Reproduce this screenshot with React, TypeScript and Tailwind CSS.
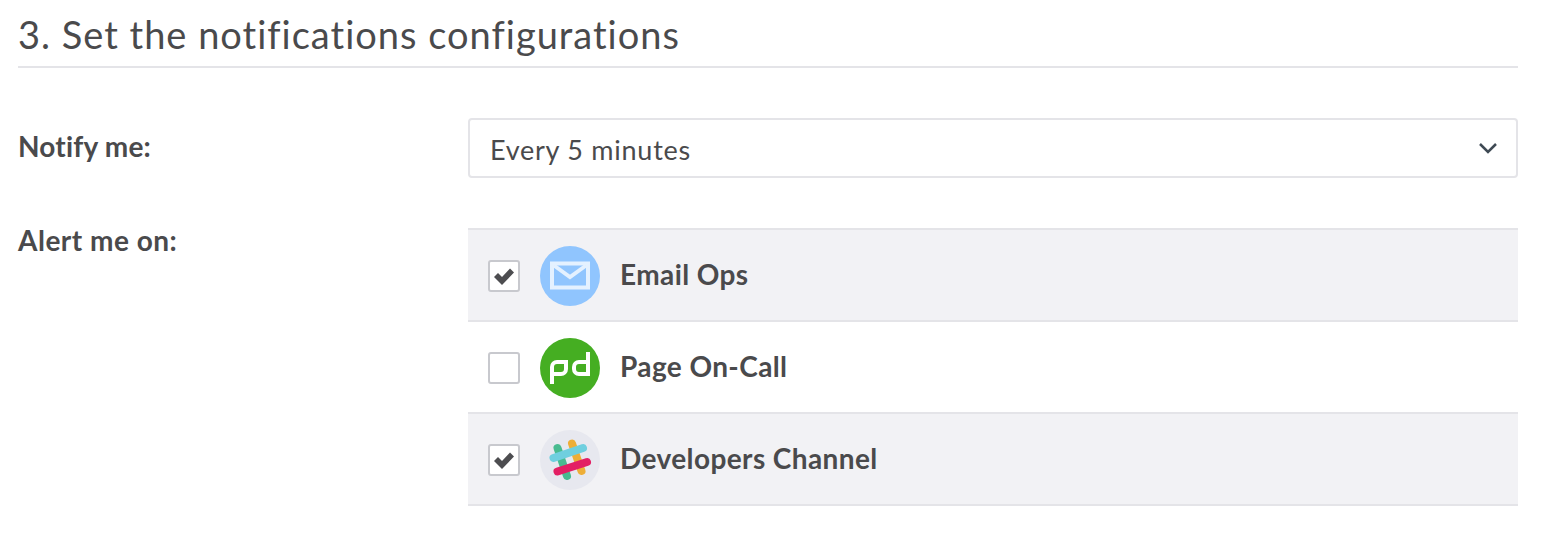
function MailIcon() {
  return (
    <svg width="60" height="60" viewBox="0 0 60 60" className="shrink-0">
      <circle cx="30" cy="30" r="30" fill="#90c5fe" />
      <rect x="12" y="17.500" width="36" height="24" fill="none" stroke="#e4f1ff" strokeWidth="4" />
      <path d="M14 19.500l16 11.500 16-11.500" fill="none" stroke="#e4f1ff" strokeWidth="4" />
    </svg>
  );
}

function PdIcon() {
  return (
    <svg width="60" height="60" viewBox="0 0 60 60" className="shrink-0">
      <circle cx="30" cy="30" r="30" fill="#45ae22" />
      <path d="M12 46V29a5 5 0 0 1 5-5h9V31a5 5 0 0 1-5 5H12" fill="none" stroke="#fff" strokeWidth="4" />
      <path d="M48 14V36H39a5 5 0 0 1-5-5V29a5 5 0 0 1 5-5h9" fill="none" stroke="#fff" strokeWidth="4" />
    </svg>
  );
}

function SlackIcon() {
  return (
    <svg width="60" height="60" viewBox="0 0 60 60" className="shrink-0">
      <circle cx="30" cy="30" r="30" fill="#e7e8ef" />
      <g fill="none" strokeWidth="8" strokeLinecap="round">
        <path d="M17.500 18L27 46" stroke="#48bb90" />
        <path d="M32 13.500L41.500 41" stroke="#eeae37" />
        <path d="M13.500 28L43 18" stroke="#6fcfdf" />
        <path d="M17.500 41.500L47 32" stroke="#e31f64" />
      </g>
    </svg>
  );
}

function Check({ on }: { on: boolean }) {
  return (
    <div className="w-8 h-8 shrink-0 rounded-[3px] border-2 border-[#c8c9ce] bg-white flex items-center justify-center">
      {on && (
        <svg width="22" height="18" viewBox="0 0 22 18">
          <path d="M1 10l4-4 4 4L17 1.500l4 4L9 18z" fill="#4d4d50" />
        </svg>
      )}
    </div>
  );
}

function Row({ on, shaded, icon, label }: { on: boolean; shaded: boolean; icon: React.ReactNode; label: string }) {
  return (
    <div className={`h-[92px] pl-5 pt-[2px] flex items-center border-b-2 border-[#e4e4e8] ${shaded ? "bg-[#f2f2f5]" : "bg-white"}`}>
      <Check on={on} />
      <div className="ml-5">{icon}</div>
      <span className="ml-5 -mt-[4px] text-[28px] tracking-[0.4px] font-bold text-[#4a4a4c]">{label}</span>
    </div>
  );
}

export default function App() {
  return (
    <div className="w-[1554px] h-[544px] bg-white px-[18px] pt-[10px] font-['Lato','Noto_Sans',sans-serif] text-[#4a4a4c]">
      <div className="w-[1500px]">
        <h2 className="h-[58px] border-b-2 border-[#e4e4e8] text-[38px] leading-[48px] tracking-[1px]">
          3. Set the notifications configurations
        </h2>
        <div className="mt-[50px] flex">
          <div className="w-[450px] pt-[8px] text-[28px] tracking-[0.2px] font-bold leading-[40px]">Notify me:</div>
          <div className="flex-1 h-[60px] rounded-[4px] border-2 border-[#e4e4e8] pl-[20px] pr-[18px] pt-[4px] flex items-center justify-between text-[27px] tracking-[0.75px]">
            <span>Every 5 minutes</span>
            <svg width="20" height="12" viewBox="0 0 20 12" className="-mt-[4px]">
              <path d="M2 2l8 8 8-8" fill="none" stroke="#3f4a54" strokeWidth="2.500" />
            </svg>
          </div>
        </div>
        <div className="mt-[50px] flex">
          <div className="w-[450px] -mt-[2px] text-[28px] tracking-[0.5px] font-bold leading-[28px]">Alert me on:</div>
          <div className="flex-1 border-t-2 border-[#e4e4e8]">
            <Row on shaded icon={<MailIcon />} label="Email Ops" />
            <Row on={false} shaded={false} icon={<PdIcon />} label="Page On-Call" />
            <Row on shaded icon={<SlackIcon />} label="Developers Channel" />
          </div>
        </div>
      </div>
    </div>
  );
}
